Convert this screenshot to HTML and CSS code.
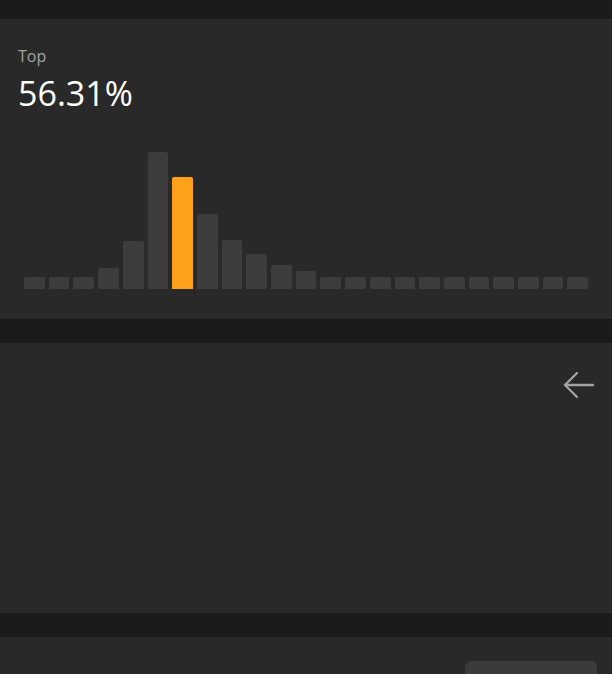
FILE: index.html
```html
<!DOCTYPE html>
<html>
<head>
<meta charset="utf-8">
<link rel="stylesheet" href="styles.css">
</head>
<body>
<div class="page">
  <section class="card card-stats">
    <div class="label">Top</div>
    <div class="value">56.31%</div>
    <div class="chart">
      <div class="bar" style="height:12px"></div>
      <div class="bar" style="height:12px"></div>
      <div class="bar" style="height:12px"></div>
      <div class="bar" style="height:21px"></div>
      <div class="bar" style="height:48px"></div>
      <div class="bar" style="height:137px"></div>
      <div class="bar active" style="height:112px"></div>
      <div class="bar" style="height:75px"></div>
      <div class="bar" style="height:49px"></div>
      <div class="bar" style="height:35px"></div>
      <div class="bar" style="height:24px"></div>
      <div class="bar" style="height:18px"></div>
      <div class="bar" style="height:12px"></div>
      <div class="bar" style="height:12px"></div>
      <div class="bar" style="height:12px"></div>
      <div class="bar" style="height:12px"></div>
      <div class="bar" style="height:12px"></div>
      <div class="bar" style="height:12px"></div>
      <div class="bar" style="height:12px"></div>
      <div class="bar" style="height:12px"></div>
      <div class="bar" style="height:12px"></div>
      <div class="bar" style="height:12px"></div>
      <div class="bar" style="height:12px"></div>
    </div>
  </section>
  <section class="card card-nav">
    <div class="nav-row">
      <svg class="back" width="31" height="28" viewBox="0 0 31 28" fill="none" stroke="#a3a3a3" stroke-width="2.3" stroke-linecap="round" stroke-linejoin="round">
        <path d="M2 14H30"/>
        <path d="M14 2L2 14L14 26"/>
      </svg>
    </div>
  </section>
  <section class="card card-bottom">
    <div class="btn"></div>
  </section>
</div>
</body>
</html>
```
FILE: styles.css
```css
html, body {
  margin: 0;
  padding: 0;
  background: #1b1b1b;
  font-family: "Open Sans", "Noto Sans", sans-serif;
  overflow: hidden;
}
.page {
  padding-top: 19px;
  display: flex;
  flex-direction: column;
  gap: 24px;
}
.card {
  background: #292929;
}
.card-stats {
  height: 300px;
  box-sizing: border-box;
  padding: 26px 0 30px 0;
  display: flex;
  flex-direction: column;
}
.label {
  font-size: 16px;
  color: #a3a3a3;
  padding-left: 18px;
  line-height: 22px;
}
.value {
  font-size: 34px;
  color: #ffffff;
  padding-left: 18px;
  line-height: 40px;
  margin-top: 6px;
}
.chart {
  margin-top: auto;
  padding: 0 24px;
  display: flex;
  align-items: flex-end;
  gap: 4px;
  height: 140px;
}
.bar {
  flex: 1;
  background: #3d3d3d;
  border-radius: 2px 2px 0 0;
}
.bar.active {
  background: #ffa11a;
}
.card-nav {
  height: 270px;
}
.nav-row {
  display: flex;
  justify-content: flex-end;
  padding: 28px 18px 0 0;
}
.card-bottom {
  height: 100px;
  padding: 24px 15px 0 0;
  display: flex;
  justify-content: flex-end;
}
.btn {
  width: 132px;
  height: 40px;
  background: #3b3b3b;
  border-radius: 6px;
}
```
